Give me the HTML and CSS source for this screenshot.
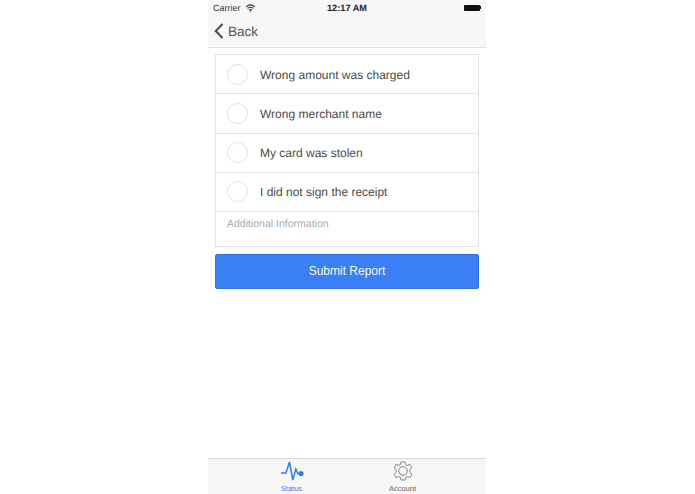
FILE: index.html
```html
<!DOCTYPE html>
<html lang="en">
<head>
<meta charset="utf-8">
<title>Report</title>
<link rel="stylesheet" href="styles.css">
</head>
<body>
<div class="phone">
  <header class="top">
    <div class="status">
      <div class="status-left">
        <span>Carrier</span>
        <svg class="wifi" viewBox="0 0 12 9" width="11" height="8"><path d="M1 3.2C4 .6 8 .6 11 3.2M2.7 5C4.7 3.4 7.3 3.4 9.300 5M4.300 6.700C5.300 6 6.700 6 7.700 6.700" fill="none" stroke="#333" stroke-width="1.200"/><circle cx="6" cy="8" r=".9" fill="#333"/></svg>
      </div>
      <div class="status-time">12:17 AM</div>
      <div class="status-right">
        <span class="battery"></span><span class="battery-tip"></span>
      </div>
    </div>
    <div class="nav">
      <svg class="chevron" viewBox="0 0 10 16" width="10" height="16"><path d="M8.500 1L1.800 8l6.700 7" fill="none" stroke="#555" stroke-width="2.200"/></svg>
      <span>Back</span>
    </div>
  </header>
  <main class="content">
    <div class="list">
      <div class="row"><span class="radio"></span><span class="label">Wrong amount was charged</span></div>
      <div class="row"><span class="radio"></span><span class="label">Wrong merchant name</span></div>
      <div class="row"><span class="radio"></span><span class="label">My card was stolen</span></div>
      <div class="row"><span class="radio"></span><span class="label">I did not sign the receipt</span></div>
      <div class="info">Additional Information</div>
    </div>
    <button class="submit" type="button">Submit Report</button>
  </main>
  <footer class="tabs">
    <div class="tab tab-active">
      <svg viewBox="0 0 24 22" width="24" height="22"><path d="M1 13h5L9.500 2l3.300 18 3-11 2 4.500h3" fill="none" stroke="#2f7cf0" stroke-width="1.500"/><circle cx="21" cy="13.500" r="2.600" fill="#2f7cf0"/></svg>
      <span>Status</span>
    </div>
    <div class="tab">
      <svg viewBox="0 0 22 22" width="22" height="22"><path d="M9 2h4l.7 2.700 1.700.8 2.500-1.200 2 3.400-2 1.900v2.800l2 1.900-2 3.400-2.500-1.200-1.700.8L13 20H9l-.7-2.700-1.700-.8-2.500 1.200-2-3.400 2-1.900V9.600l-2-1.900 2-3.400 2.500 1.200 1.700-.8z" fill="none" stroke="#777" stroke-width=".9" stroke-linejoin="round"/><circle cx="11" cy="11" r="4.300" fill="none" stroke="#777" stroke-width=".9"/></svg>
      <span>Account</span>
    </div>
  </footer>
</div>
</body>
</html>
```
FILE: styles.css
```css
* { box-sizing: border-box; }
html, body { margin: 0; padding: 0; height: 100%; background: #fff; }
body {
  display: flex;
  justify-content: center;
  font-family: "Liberation Sans", Arial, sans-serif;
  color: #444;
  text-rendering: geometricPrecision;
}
.phone {
  width: 278px;
  height: 494px;
  display: flex;
  flex-direction: column;
  margin-right: 1px;
}
.top {
  height: 48px;
  background: #f7f7f7;
  border-bottom: 1px solid #dedede;
}
.status {
  height: 15px;
  display: grid;
  grid-template-columns: 1fr auto 1fr;
  align-items: center;
  padding: 0 5px 0 5px;
  font-size: 9px;
  color: #333;
}
.status-left { display: flex; align-items: center; gap: 4px; }
.status-time { font-weight: bold; font-size: 9.200px; color: #222; }
.status-right { display: flex; justify-content: flex-end; align-items: center; }
.battery { width: 16px; height: 6px; background: #111; border-radius: 1px; }
.battery-tip { width: 1px; height: 3px; background: #111; }
.nav {
  height: 32px;
  display: flex;
  align-items: center;
  gap: 4px;
  padding-left: 6px;
  font-size: 13.500px;
  color: #555;
}
.content {
  flex: 1;
  padding: 6px 7px 0 7px;
  display: flex;
  flex-direction: column;
  gap: 7px;
}
.list { border: 1px solid #e4e4e4; height: 193px; display: flex; flex-direction: column; }
.row {
  height: 39.250px;
  display: flex;
  align-items: center;
  gap: 12.500px;
  padding-left: 10.500px;
  border-bottom: 1px solid #e4e4e4;
  font-size: 12px;
  color: #4a4a4a;
  flex: none;
}
.label { padding-top: 1px; }
.radio {
  width: 21px;
  height: 21px;
  border: 1px solid #e2e2e2;
  border-radius: 50%;
  flex: none;
}
.info {
  padding: 6px 11px;
  font-size: 10.500px;
  color: #aaa;
}
.submit {
  height: 35px;
  width: 100%;
  background: #3a7ff4;
  border: 1px solid #2f6fd8;
  border-radius: 2px;
  color: #f2f6ff;
  font-family: inherit;
  font-size: 12px;
  padding: 0 0 2px;
}
.tabs {
  height: 36px;
  background: #f7f7f7;
  border-top: 1px solid #d8d8d8;
  display: grid;
  grid-template-columns: 1fr 1fr;
  padding: 0 28px;
}
.tab {
  display: flex;
  flex-direction: column;
  align-items: center;
  font-size: 7.500px;
  color: #666;
  padding-top: 1px;
  gap: 2px;
}
.tab-active { color: #3a7ff4; }
```
